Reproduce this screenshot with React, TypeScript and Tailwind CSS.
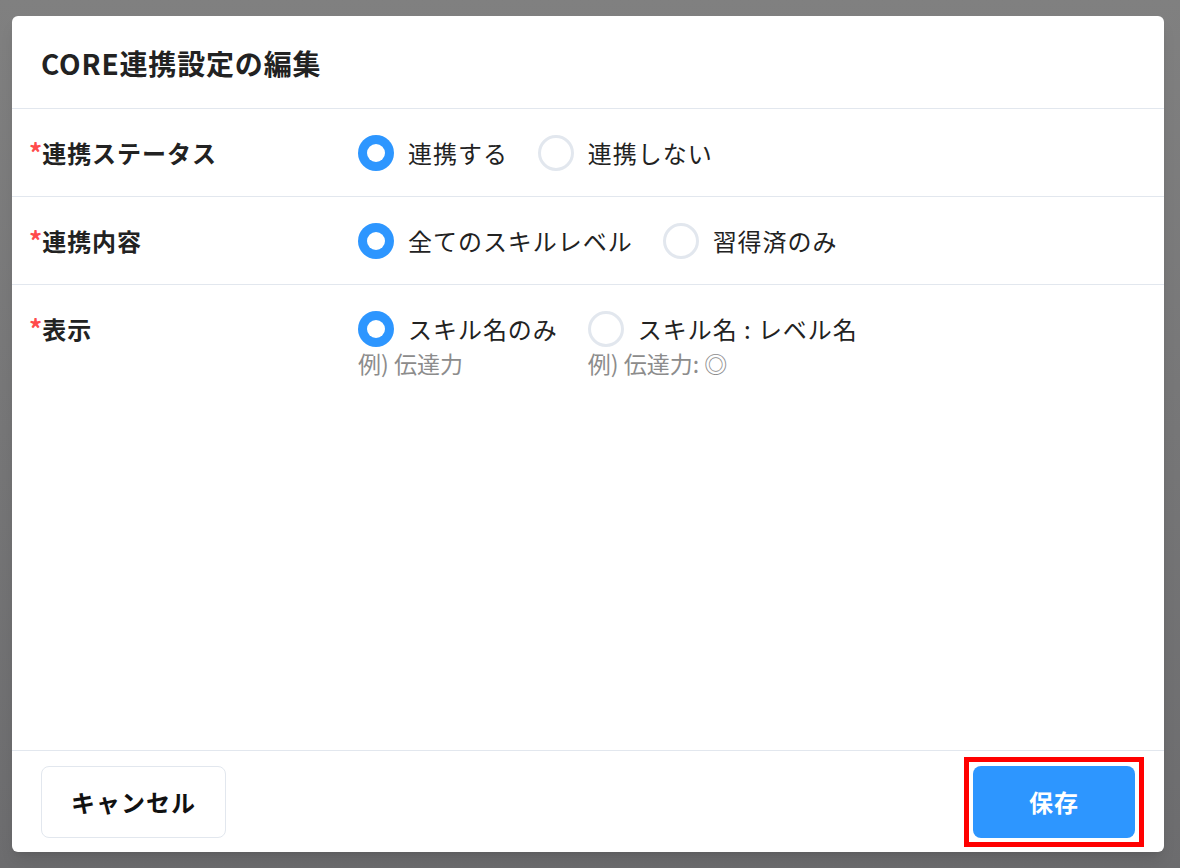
import React, { useState } from 'react'

const FONT = '"Noto Sans CJK JP", "Noto Sans", sans-serif'

type Opt = { value: string; label: string; example?: string }

function Radio({ checked }: { checked: boolean }) {
  return checked ? (
    <span className="h-9 w-9 shrink-0 rounded-full bg-[#2d96ff] flex items-center justify-center">
      <span className="h-[18px] w-[18px] rounded-full bg-white" />
    </span>
  ) : (
    <span className="h-9 w-9 shrink-0 rounded-full border-[3px] border-[#e2e7ee] bg-white" />
  )
}

function Row({
  label,
  options,
  value,
  onChange,
  last,
}: {
  label: string
  options: Opt[]
  value: string
  onChange: (v: string) => void
  last?: boolean
}) {
  return (
    <div className={`flex pl-[17px] pt-[26px] ${last ? 'flex-1' : 'pb-[25px] border-b border-[#e2e7ee]'}`}>
      <div className="w-[329px] shrink-0 h-9 flex items-center text-[24px] font-bold text-[#222] tracking-[0.04em]">
        <span className="text-[#ff4b4b] self-start -mt-[1px] text-[26px] tracking-normal leading-9">*</span>
        {label}
      </div>
      <div className="flex gap-[30px]">
        {options.map(o => (
          <div key={o.value} className="flex flex-col">
            <button
              type="button"
              onClick={() => onChange(o.value)}
              className="flex items-center gap-[14px] h-9"
            >
              <Radio checked={value === o.value} />
              <span className="text-[24px] text-[#222] tracking-[0.04em]">{o.label}</span>
            </button>
            {o.example && (
              <span className="text-[23px] text-[#8c8c8c] leading-none mt-[5px]">{o.example}</span>
            )}
          </div>
        ))}
      </div>
    </div>
  )
}

export default function App() {
  const [status, setStatus] = useState('on')
  const [content, setContent] = useState('all')
  const [display, setDisplay] = useState('name')

  return (
    <div className="h-[868px] w-full bg-gradient-to-b from-[#808080] to-[#6c6c6e] pt-4 pl-3 pr-4 pb-4" style={{ fontFamily: FONT }}>
      <div className="h-full bg-white rounded-[6px] flex flex-col shadow-lg overflow-hidden">
        {/* header */}
        <div className="h-[93px] shrink-0 flex items-center px-[29px] border-b border-[#e2e7ee]">
          <h1 className="text-[28px] font-bold text-[#222] tracking-[0.03em] mt-[2px]">CORE連携設定の編集</h1>
        </div>

        <div className="flex-1 flex flex-col">
          <Row
            label="連携ステータス"
            value={status}
            onChange={setStatus}
            options={[
              { value: 'on', label: '連携する' },
              { value: 'off', label: '連携しない' },
            ]}
          />
          <Row
            label="連携内容"
            value={content}
            onChange={setContent}
            options={[
              { value: 'all', label: '全てのスキルレベル' },
              { value: 'acquired', label: '習得済のみ' },
            ]}
          />
          <Row
            label="表示"
            value={display}
            onChange={setDisplay}
            last
            options={[
              { value: 'name', label: 'スキル名のみ', example: '例) 伝達力' },
              { value: 'level', label: 'スキル名 : レベル名', example: '例) 伝達力: ◎' },
            ]}
          />
        </div>

        {/* footer */}
        <div className="h-[102px] shrink-0 border-t border-[#e2e7ee] flex items-center justify-between pl-[29px] pr-[20px]">
          <button className="h-[72px] w-[185px] rounded-[8px] border border-[#e2e7ee] bg-white text-[24px] font-bold text-[#111] tracking-[0.04em]">
            キャンセル
          </button>
          <div className="border-[5px] border-[#ff0000] p-[4px]">
            <button className="h-[72px] w-[162px] rounded-[8px] bg-[#2d96ff] text-[24px] font-bold text-white tracking-[0.04em] flex items-center justify-center">
              保存
            </button>
          </div>
        </div>
      </div>
    </div>
  )
}
